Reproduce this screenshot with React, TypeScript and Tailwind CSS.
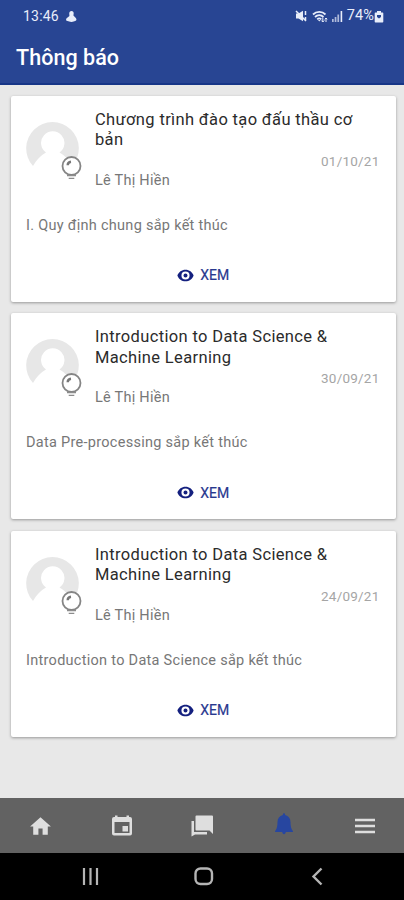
import { MdHome } from "react-icons/md";

const notifications = [
  {
    id: 1,
    title: "Chương trình đào tạo đấu thầu cơ bản",
    author: "Lê Thị Hiền",
    date: "01/10/21",
    body: "I. Quy định chung sắp kết thúc",
  },
  {
    id: 2,
    title: "Introduction to Data Science & Machine Learning",
    author: "Lê Thị Hiền",
    date: "30/09/21",
    body: "Data Pre-processing sắp kết thúc",
  },
  {
    id: 3,
    title: "Introduction to Data Science & Machine Learning",
    author: "Lê Thị Hiền",
    date: "24/09/21",
    body: "Introduction to Data Science sắp kết thúc",
  },
];

function StatusBar() {
  return (
    <div className="flex h-8 items-center justify-between pr-[20px] pl-[23px] text-[14px] text-[#e8edfa]">
      <div className="flex items-center gap-[6px]">
        <span className="tracking-[0.2px]">13:46</span>
        <svg viewBox="0 0 12 14" className="h-[13px] w-[12px]" fill="currentColor" aria-hidden="true">
          <path d="M6.500 1c1.700 0 2.500 1 2.400 2.600L8.600 6l2.600 2.600c1 1.200 1 2.800-.7 3.200-1.200.3-2 1-4 1s-2.900-.8-4.300-1C.5 11.500.3 9.900 1.300 8.800L4.300 6.500 4.100 3.600C4.100 2 5 1 6.500 1Z" />
        </svg>
      </div>
      <div className="flex items-center">
        <svg viewBox="0 0 12 12" className="mr-[5px] h-[12px] w-[12px]" fill="currentColor" aria-hidden="true">
          <path d="M1 3.500h2.500L8 .8v10.500L3.500 8.500H1Z" />
          <path d="M1 1l10 10M10.500 1v4M10.500 7v3.500" fill="none" stroke="currentColor" strokeWidth="1.500" />
        </svg>
        <svg viewBox="0 0 16 13" className="mr-[3px] h-[13px] w-[16px]" fill="none" stroke="currentColor" aria-hidden="true">
          <path d="M1 4.500C4.500 1 10 1 13.500 4.500M3 7C5.500 4.600 9 4.600 11.500 7M5.200 9.300c1.300-1.200 2.800-1.200 4.100 0" strokeWidth="1.800" />
          <path d="M6 10h2.500l-1.200 1.600Z" fill="currentColor" stroke="none" />
          <path d="M10.800 7.500v4.500M9.300 10.500l1.500 1.500 1.500-1.500M14 12V8M12.800 9.300L14 8l1.200 1.300" strokeWidth="1" />
        </svg>
        <svg viewBox="0 0 12 12" className="mr-[4px] h-[12px] w-[12px]" fill="currentColor" aria-hidden="true">
          <path d="M1 9h1.700v3H1ZM3.700 7h1.700v5H3.700ZM6.400 4.500h1.700V12H6.400Z" opacity="0.7" />
          <path d="M9.600 1h1.600v11H9.600Z" />
        </svg>
        <span className="text-[14.500px] tracking-[0.100px]">74%</span>
        <svg viewBox="0 0 10 13" className="h-[13px] w-[10px]" fill="currentColor" aria-hidden="true">
          <path fillRule="evenodd" d="M3 1h4v1.500h1.500a.8.800 0 0 1 .8.800v8.400a.8.800 0 0 1-.8.800h-7a.8.800 0 0 1-.8-.8V3.300a.8.800 0 0 1 .8-.8H3ZM3 5v2l2 1.500 2-1.500V5Z" />
        </svg>
      </div>
    </div>
  );
}

function Avatar() {
  return (
    <svg viewBox="0 0 60 62" className="h-[62px] w-[60px] shrink-0" aria-hidden="true">
      <path
        d="M7 45A26.300 26.300 0 1 1 46 45C42.500 38.500 39 34.500 33.500 31.500A11.700 11.700 0 1 0 20 31.500C14.500 34.500 11 38.500 7 45Z"
        fill="#e7e7e7"
      />
      <circle cx="45.500" cy="45" r="9" fill="#fff" stroke="#858585" strokeWidth="1.800" />
      <path d="M41.700 44.300c0-2 1.300-3.400 3.300-3.600" fill="none" stroke="#777" strokeWidth="2.400" />
      <path d="M41 54.600h9M42.700 57.400h5.600" stroke="#8c8c8c" strokeWidth="1.400" />
    </svg>
  );
}

function EyeIcon() {
  return (
    <svg viewBox="0 0 18 13" className="h-[13px] w-[17px]" aria-hidden="true">
      <path
        fillRule="evenodd"
        fill="#14207f"
        d="M9 .3C5 .3 1.800 2.800.4 6.500c1.400 3.700 4.600 6.200 8.600 6.200s7.200-2.500 8.600-6.200C16.200 2.800 13 .3 9 .3Zm0 10.500a4.300 4.300 0 1 1 0-8.600 4.300 4.300 0 0 1 0 8.600Z"
      />
      <circle cx="9" cy="6.500" r="2.100" fill="#14207f" />
    </svg>
  );
}

function NotificationCard({ item }: { item: (typeof notifications)[number] }) {
  return (
    <article className="flex h-[206px] flex-col rounded-[2px] bg-white shadow-[0_1px_3px_rgba(0,0,0,0.350)]">
      <div className="flex pt-[14px] pr-[16.500px] pl-[15.500px]">
        <div className="pt-[11px]">
          <Avatar />
        </div>
        <div className="ml-[9px] flex-1">
          <h2 className="h-[41px] w-[275px] text-[16.500px] leading-[20.800px] tracking-[0.350px] text-[#2b2b2b]">
            {item.title}
          </h2>
          <p className="text-right text-[13.500px] leading-[20px] tracking-[0.220px] text-[#a5a5a5]">{item.date}</p>
          <p className="text-[14.500px] leading-[20px] tracking-[0.250px] text-[#777]">{item.author}</p>
        </div>
      </div>
      <p className="mt-[25px] px-[15.500px] text-[14.500px] leading-[20px] tracking-[0.280px] text-[#777]">{item.body}</p>
      <button className="mt-[29.500px] flex items-center justify-center gap-[6px] text-[14px] leading-[20px] text-[#28388f] [-webkit-text-stroke:0.2px]">
        <EyeIcon />
        XEM
      </button>
    </article>
  );
}

function TabBar() {
  return (
    <nav className="grid h-[55px] grid-cols-5 items-center justify-items-center bg-[#626262] text-[#dedede]">
      <MdHome className="mt-[2px] size-[25px]" />
      <svg viewBox="0 0 24 24" className="ml-[2px] size-[24px]" fill="currentColor" aria-hidden="true">
        <path
          fillRule="evenodd"
          d="M4 3h1V1.500h2.500V3h9V1.500H19V3h1a2 2 0 0 1 2 2v14.500a2 2 0 0 1-2 2H4a2 2 0 0 1-2-2V5a2 2 0 0 1 2-2Zm.5 5v11h15V8Z"
        />
        <path d="M12.500 12H18v5.500h-5.500Z" />
      </svg>
      <svg viewBox="0 0 24 24" className="ml-px size-[24px]" fill="currentColor" aria-hidden="true">
        <path d="M6.500 1.500h15.500a1 1 0 0 1 1 1V20l-3.500-3.500h-13a1 1 0 0 1-1-1v-13a1 1 0 0 1 1-1Z" />
        <path d="M1.500 7H4V18H17v2.500H5L1.500 22.500Z" />
      </svg>
      <svg viewBox="0 0 20 24" className="mb-[4px] ml-[2px] h-[24px] w-[20px]" fill="#2746a0" aria-hidden="true">
        <path d="M10 1.200c.8 0 1.100.7 1.200 1.700 3.300.8 5.300 3.400 5.300 7 0 4.500.8 7 2.400 9.200v.9H1.100v-.9c1.600-2.200 2.400-4.700 2.400-9.200 0-3.600 2-6.200 5.300-7 .1-1 .4-1.700 1.200-1.700ZM8.200 20h3.600c-.2 1.300-.8 2.200-1.800 2.200s-1.600-.9-1.800-2.200Z" />
      </svg>
      <svg viewBox="0 0 24 24" className="mt-px ml-[3px] size-[24px]" aria-hidden="true">
        <path d="M2 6h20M2 12h20M2 18h20" fill="none" stroke="currentColor" strokeWidth="2.400" />
      </svg>
    </nav>
  );
}

function SystemBar() {
  return (
    <div className="flex h-[47px] items-center bg-black px-[81px] text-[#b5b5b5]">
      <svg viewBox="0 0 242 20" className="h-[20px] w-[242px] shrink-0" fill="none" stroke="currentColor" strokeWidth="2.200" aria-hidden="true">
        <path d="M3 1v17M9.500 1v17M16 1v17" />
        <rect x="114.500" y="1.500" width="16.500" height="15.500" rx="5" strokeWidth="2.400" />
        <path d="M240.500 1.500l-8 8 8 8" strokeWidth="2.400" />
      </svg>
    </div>
  );
}

export default function App() {
  return (
    <div className="flex h-[900px] w-full flex-col overflow-hidden bg-[#e8e8e8] font-[Roboto,sans-serif]">
      <header className="h-[85px] border-b-2 border-[#173687] bg-[#284593]">
        <StatusBar />
        <h1 className="pt-[11px] pl-[16px] text-[21.500px] leading-[30px] font-medium tracking-[0.050px] text-white">
          Thông báo
        </h1>
      </header>
      <main className="flex flex-1 flex-col gap-[11.500px] pt-[10.500px] pr-[8px] pl-[10.500px]">
        {notifications.map((item) => (
          <NotificationCard key={item.id} item={item} />
        ))}
      </main>
      <TabBar />
      <SystemBar />
    </div>
  );
}
